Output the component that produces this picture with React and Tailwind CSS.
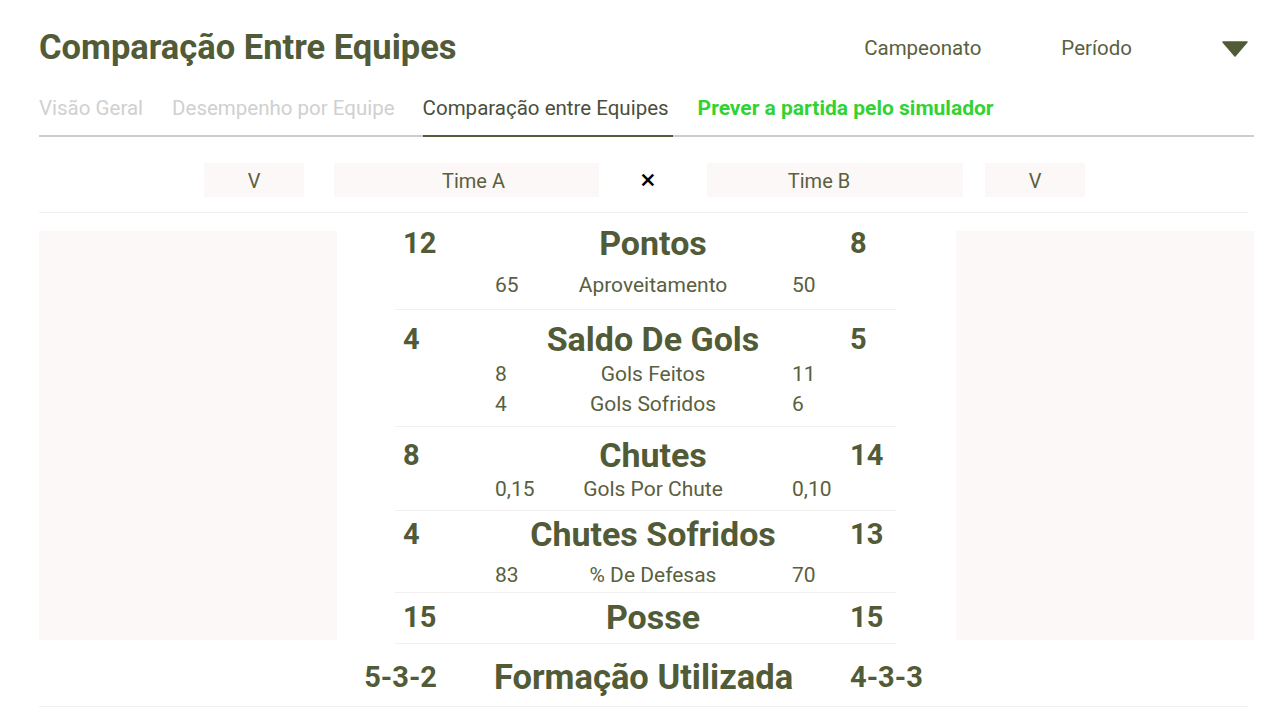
import React from "react";

const F = { fontFamily: "Roboto, 'Open Sans', sans-serif" };

function Big({ left, title, right, className = "" }) {
  return (
    <div className={"grid grid-cols-[61px_1fr_46px] items-center h-[36px] " + className}>
      <div className="pl-2 text-[29px] font-bold leading-[36px]">{left}</div>
      <div className="text-center text-[34px] font-bold leading-[36px] whitespace-nowrap">{title}</div>
      <div className="text-[29px] font-bold leading-[36px]">{right}</div>
    </div>
  );
}

function Sub({ left, label, right, className = "" }) {
  return (
    <div className={"grid grid-cols-[100px_78px_160px_1fr] items-center h-[30px] text-[21px] leading-[30px] text-[#596040] " + className}>
      <div />
      <div>{left}</div>
      <div className="text-center whitespace-nowrap">{label}</div>
      <div className="pl-[59px]">{right}</div>
    </div>
  );
}

export default function App() {
  return (
    <div style={F} className="w-[1280px] h-[720px] bg-white pl-[39px] pr-[26px] text-[#515b37] overflow-hidden">
      {/* header */}
      <div className="flex items-center justify-between pt-[27px] h-[67px]">
        <h1 className="text-[34.5px] font-bold leading-[40px]">Comparação Entre Equipes</h1>
        <div className="flex items-center text-[20.5px] text-[#5a6040] mr-[6px] pt-[3px]">
          <span>Campeonato</span>
          <span className="ml-[80px]">Período</span>
          <svg className="ml-[90px]" width="26" height="16" viewBox="0 0 26 16">
            <path d="M1 1 H25 L13 15 Z" fill="#515b37" stroke="#515b37" strokeWidth="1.5" strokeLinejoin="round" />
          </svg>
        </div>
      </div>

      {/* tabs */}
      <div className="flex items-end gap-[29px] border-b-2 border-[#cdcdcd] pt-[27px] text-[20.5px] leading-[28px]">
        <div className="pb-[13px] text-[#d0d0d0]">Visão Geral</div>
        <div className="pb-[13px] text-[#d0d0d0]">Desempenho por Equipe</div>
        <div className="pb-[13px] pr-[4px] -ml-[1px] text-[#4a4f3a] border-b-2 border-[#515b37] -mb-[2px]">Comparação entre Equipes</div>
        <div className="pb-[13px] -ml-[4px] text-[21px] font-bold text-[#33d233]">Prever a partida pelo simulador</div>
      </div>

      {/* selectors */}
      <div className="flex items-center pt-[26px] pb-[15px] border-b border-[#f4eeee] mr-[6px] text-[20px] text-[#5a6040]">
        <div className="ml-[165px] w-[100px] h-[34px] bg-[#fcf8f7] flex items-center justify-center pt-[2px]">V</div>
        <div className="ml-[30px] w-[265px] h-[34px] bg-[#fcf8f7] flex items-center justify-center pl-[14px] pt-[2px]">Time A</div>
        <div className="w-[108px] h-[34px] flex items-center justify-center pr-[10px] text-black text-[28px] leading-none">×</div>
        <div className="w-[256px] h-[34px] bg-[#fcf8f7] flex items-center justify-center pr-[32px] pt-[2px]">Time B</div>
        <div className="ml-[22px] w-[100px] h-[34px] bg-[#fcf8f7] flex items-center justify-center pt-[2px]">V</div>
      </div>

      {/* main */}
      <div className="flex items-start mt-[12px]">
        <div className="mt-[6px] w-[298px] h-[409px] bg-[#fcf8f7]" />
        <div className="ml-[58px] w-[501px]">
          <div className="pb-[9px] border-b border-[#f3efee]">
            <Big left="12" title="Pontos" right="8" />
            <Sub className="mt-[9px]" left="65" label="Aproveitamento" right="50" />
          </div>
          <div className="pt-[11px] pb-[7px] border-b border-[#f3efee]">
            <Big left="4" title="Saldo De Gols" right="5" />
            <Sub className="mt-[2px]" left="8" label="Gols Feitos" right="11" />
            <Sub left="4" label="Gols Sofridos" right="6" />
          </div>
          <div className="pt-[10px] pb-[6px] border-b border-[#f3efee]">
            <Big left="8" title="Chutes" right="14" />
            <Sub className="mt-[1px]" left="0,15" label="Gols Por Chute" right="0,10" />
          </div>
          <div className="pt-[5px] pb-[2px] border-b border-[#f3efee]">
            <Big left="4" title="Chutes Sofridos" right="13" />
            <Sub className="mt-[8px]" left="83" label="% De Defesas" right="70" />
          </div>
          <div className="pt-[6px] pb-[8px] border-b border-[#f3efee]">
            <Big left="15" title="Posse" right="15" />
          </div>
        </div>
        <div className="mt-[6px] ml-[60px] w-[298px] h-[409px] bg-[#fcf8f7]" />
      </div>

      {/* formação */}
      <div className="flex items-center pt-[13px] pb-[9px] border-b border-[#f3efee] mr-[6px]">
        <div className="w-[398px] text-right text-[29px] font-bold leading-[40px]">5-3-2</div>
        <div className="w-[413px] text-center text-[34.5px] font-bold leading-[40px] whitespace-nowrap">Formação Utilizada</div>
        <div className="text-[29px] font-bold leading-[40px]">4-3-3</div>
      </div>
    </div>
  );
}
